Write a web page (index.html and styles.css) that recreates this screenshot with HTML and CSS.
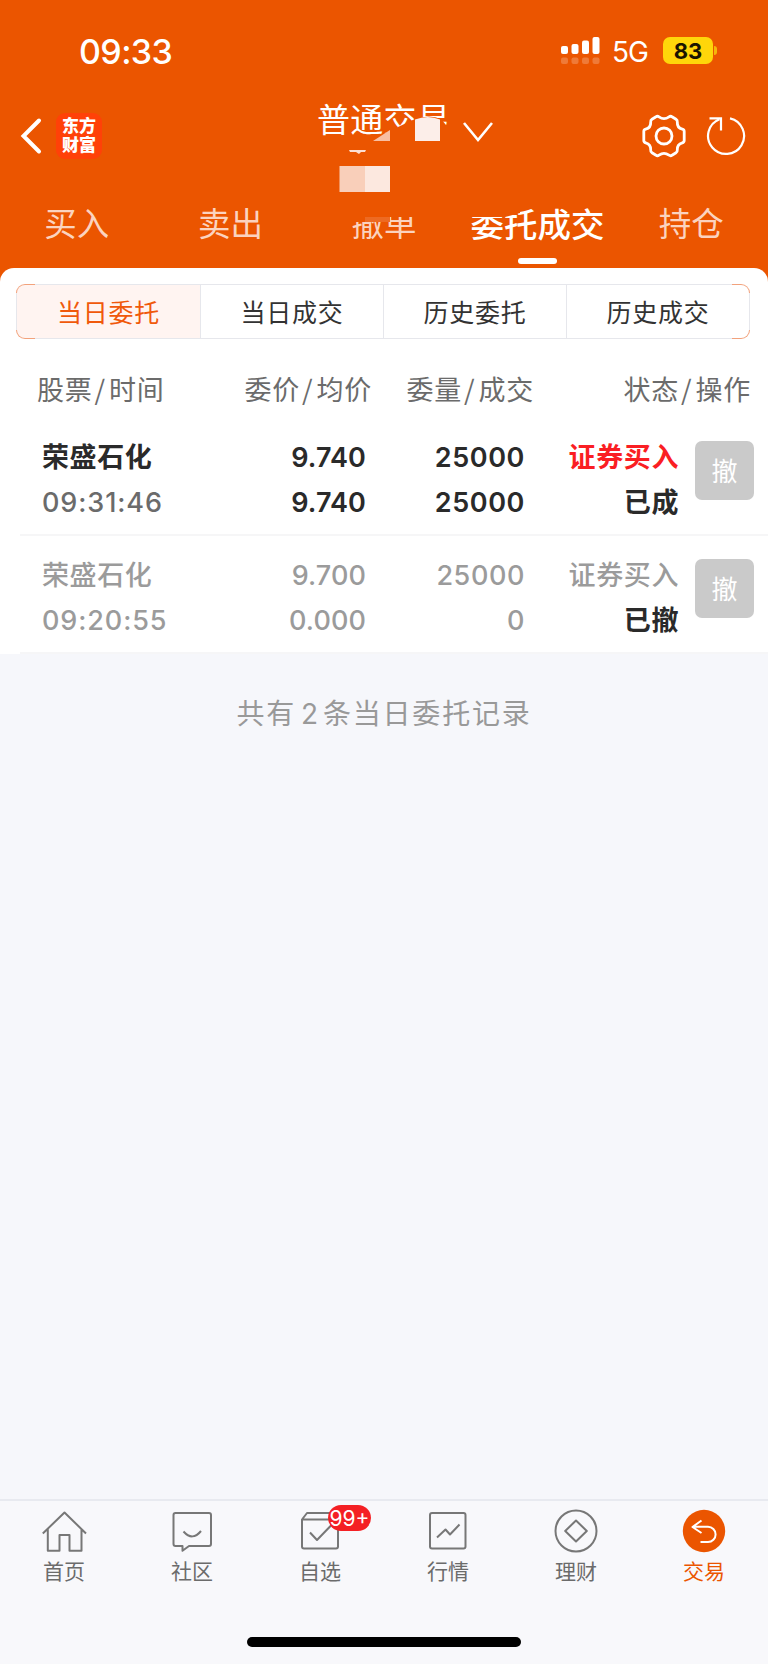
FILE: index.html
```html
<!DOCTYPE html>
<html lang="zh-CN">
<head>
    <meta charset="UTF-8">
    <meta name="viewport" content="width=device-width, initial-scale=1.0">
    <title>委托成交</title>
    <link rel="stylesheet" href="styles.css">
</head>
<body>

<header class="header">
    <div class="status-bar">
        <span class="clock">09:33</span>
        <svg class="signal" width="39" height="27" viewBox="0 0 39 27" fill="#fff">
            <rect x="0" y="9" width="7" height="8" rx="2"/>
            <rect x="10.5" y="7" width="7" height="10" rx="2"/>
            <rect x="21" y="3.5" width="7" height="13.5" rx="2"/>
            <rect x="31.5" y="0" width="7" height="17" rx="2"/>
            <g fill-opacity="0.22">
                <rect x="0" y="20.5" width="7" height="6.5" rx="2"/>
                <rect x="10.5" y="20.5" width="7" height="6.5" rx="2"/>
                <rect x="21" y="20.5" width="7" height="6.5" rx="2"/>
                <rect x="31.5" y="20.5" width="7" height="6.5" rx="2"/>
            </g>
        </svg>
        <span class="network">5G</span>
        <span class="battery">83</span>
        <span class="battery-tip"></span>
    </div>

    <div class="title-bar">
        <svg class="back" width="22" height="38" viewBox="0 0 22 38" fill="none" stroke="#fff" stroke-width="4">
            <path d="M19 3.5L3.5 19L19 34.5" stroke-linecap="round"/>
        </svg>
        <div class="logo"><span>东方</span><span>财富</span></div>
        <h1 class="title">普通交易</h1>
        <svg class="arrow" width="32" height="22" viewBox="0 0 32 22" fill="none" stroke="#fff" stroke-width="2.6">
            <path d="M2 2L16 19L30 2"/>
        </svg>
        <svg class="gear" width="46" height="46" viewBox="0 0 46 46" fill="none" stroke="#fff" stroke-width="2.8" stroke-linejoin="round">
            <path d="M15 3.8Q16.4 2.7 18 3.8Q23 7.4 28 3.8Q29.6 2.7 31 3.8L35 6.3Q36.5 7.2 36.3 9Q36 14.9 41.3 16.2Q43.2 16.7 43.2 18.5V27.5Q43.2 29.3 41.3 29.8Q36 31.1 36.3 37Q36.5 38.8 35 39.7L31 42.2Q29.6 43.3 28 42.2Q23 38.6 18 42.2Q16.4 43.3 15 42.2L11 39.7Q9.5 38.8 9.7 37Q10 31.1 4.7 29.8Q2.8 29.3 2.8 27.5V18.5Q2.8 16.7 4.7 16.2Q10 14.9 9.7 9Q9.5 7.2 11 6.3Z"/>
            <circle cx="23" cy="23" r="8"/>
        </svg>
        <svg class="refresh" width="40" height="40" viewBox="0 0 40 40" fill="none" stroke="#fff" stroke-width="2.2">
            <path d="M24 2.4A18 18 0 1 1 13.5 3.2"/>
            <path d="M3.5 2.3H15V14.5"/>
        </svg>
    </div>

    <nav class="tabs">
        <a class="tab">买入</a>
        <a class="tab">卖出</a>
        <a class="tab">撤单</a>
        <a class="tab active">委托成交</a>
        <a class="tab">持仓</a>
    </nav>

    <!-- masked account number -->
    <svg class="mask" width="200" height="130" viewBox="330 95 200 130">
        <path fill="#eb5500" d="M373 141L390 130L398 127L415 119Q430 114 441 119L446 125L452 121V145H520V213L505 217H415V217H390V222H340V141Z"/>
        <path fill="#f8bfa3" d="M373 141L390 130V141Z"/>
        <path fill="#fceee9" d="M415 119.5Q428 114.5 440 119.5V141H415Z"/>
        <path fill="#fcdfd2" d="M349 150H366L365 152H361L359 154L356 152H350Z"/>
        <rect x="339.5" y="166" width="25.5" height="26" fill="#f9cfba"/>
        <rect x="365" y="166" width="25" height="26" fill="#fce8df"/>
        <path fill="#ed6a22" d="M365 217H390V222H365Z"/>
    </svg>
</header>

<main class="panel">
    <div class="segment">
        <button class="segment-btn selected">当日委托</button>
        <button class="segment-btn">当日成交</button>
        <button class="segment-btn">历史委托</button>
        <button class="segment-btn">历史成交</button>
    </div>

    <div class="columns table-head">
        <span>股票<i>/</i>时间</span>
        <span>委价<i>/</i>均价</span>
        <span>委量<i>/</i>成交</span>
        <span>状态<i>/</i>操作</span>
    </div>

    <div class="columns order">
        <div class="cell"><b>荣盛石化</b><span class="time">09:31:46</span></div>
        <div class="cell price"><b>9.740</b><b>9.740</b></div>
        <div class="cell"><b>25000</b><b>25000</b></div>
        <div class="cell"><b class="buy">证券买入</b><b>已成</b></div>
        <button class="cancel-btn">撤</button>
    </div>

    <div class="columns order cancelled">
        <div class="cell"><b>荣盛石化</b><span class="time">09:20:55</span></div>
        <div class="cell price"><b>9.700</b><b>0.000</b></div>
        <div class="cell"><b>25000</b><b>0</b></div>
        <div class="cell"><b>证券买入</b><b class="state">已撤</b></div>
        <button class="cancel-btn">撤</button>
    </div>
</main>

<p class="summary">共有<span>2</span>条当日委托记录</p>

<footer class="bottom">
    <nav class="bottom-nav">
        <a class="nav-item">
            <svg width="46" height="46" viewBox="0 0 46 46">
                <path d="M1.8 24.5L23.5 3.5L45 24.5M6.8 20V41.8H18.5V26H28.5V41.8H40.5V20"/>
            </svg>
            首页
        </a>
        <a class="nav-item">
            <svg width="46" height="46" viewBox="0 0 46 46">
                <path d="M6.5 4H40Q42 4 42 6V35Q42 37 40 37H20L13.5 41.8V37H6.5Q4.5 37 4.5 35V6Q4.5 4 6.5 4Z"/>
                <path d="M14.5 22.5Q23.5 32.5 32 22"/>
            </svg>
            社区
        </a>
        <a class="nav-item">
            <svg width="46" height="46" viewBox="0 0 46 46">
                <path d="M5 10.5H41V37.5Q41 39.5 39 39.5H7Q5 39.5 5 37.5V10.5L10 4H36L41 10.5"/>
                <path d="M13 23.5L20 31L34 16.5"/>
            </svg>
            自选
            <span class="badge">99+</span>
        </a>
        <a class="nav-item">
            <svg width="46" height="46" viewBox="0 0 46 46">
                <rect x="5" y="4" width="35.5" height="35.5" rx="2"/>
                <path d="M12 28.5L20.5 20.5L25 25.5L34.5 15.5"/>
            </svg>
            行情
        </a>
        <a class="nav-item">
            <svg width="46" height="46" viewBox="0 0 46 46">
                <circle cx="23" cy="22" r="20.5"/>
                <path d="M23 11.5L33.8 22L23 32.5L12.2 22Z"/>
            </svg>
            理财
        </a>
        <a class="nav-item current">
            <svg width="46" height="46" viewBox="0 0 46 46">
                <circle cx="23" cy="22" r="21.2" fill="#eb5500" stroke="none"/>
                <path stroke="#fff" d="M20.5 11.5L11.5 18L20.5 24M12 17.8H27A7.6 7.6 0 0 1 27 33H19.5"/>
            </svg>
            交易
        </a>
    </nav>
    <div class="home-bar"></div>
</footer>

</body>
</html>
```

FILE: styles.css
```css
* {
    box-sizing: border-box;
}

body {
    margin: 0;
    width: 768px;
    height: 1664px;
    display: flex;
    flex-direction: column;
    background-color: #f6f7fb;
    font-family: Inter, 'Noto Sans CJK SC', sans-serif;
    color: #2a2a2a;
    overflow: hidden;
}

button {
    font-family: inherit;
    padding: 0;
    border: none;
}

/* Header */
.header {
    position: relative;
    height: 285px;
    flex-shrink: 0;
    background-color: #eb5500;
    color: #fff;
}

.status-bar {
    display: flex;
    align-items: center;
    height: 101px;
    padding-left: 79px;
}

.clock {
    width: 482px;
    padding-top: 1px;
    font-size: 34px;
    font-weight: 500;
    letter-spacing: -0.6px;
}

.network {
    width: 49px;
    padding: 3px 0 0 12px;
    font-size: 28px;
    letter-spacing: -1px;
}

.battery {
    width: 50px;
    height: 27px;
    margin-left: 14px;
    border-radius: 7px;
    background-color: #ffd60a;
    color: #1a1400;
    font-size: 22px;
    font-weight: 700;
    line-height: 28px;
    text-align: center;
}

.battery-tip {
    width: 3px;
    height: 9px;
    margin-left: 1px;
    border-radius: 0 4px 4px 0;
    background-color: #f5b70a;
}

.title-bar {
    display: flex;
    align-items: center;
    height: 70px;
    padding-left: 20px;
}

.logo {
    display: flex;
    flex-direction: column;
    width: 46px;
    height: 46px;
    margin-left: 14px;
    padding-top: 4px;
    border-radius: 9px;
    background-color: #ff4108;
    font-size: 17px;
    font-weight: 900;
    line-height: 19px;
    text-align: center;
}

.title {
    width: 134px;
    height: 66px;
    margin: 0 0 0 215px;
    font-size: 33px;
    font-weight: 400;
    line-height: 34px;
    letter-spacing: 0.3px;
    white-space: nowrap;
}

.arrow {
    margin: 0 0 9px 11px;
}

.gear {
    margin-left: 147px;
}

.refresh {
    margin-left: 19px;
}

.tabs {
    display: grid;
    grid-template-columns: repeat(5, 1fr);
    height: 96px;
}

.tab {
    display: flex;
    flex-direction: column;
    align-items: center;
    padding-top: 30px;
    font-size: 32.5px;
    line-height: 48px;
    color: #fbd3bf;
}

.tab.active {
    color: #fff;
    font-weight: 500;
    font-size: 33.5px;
}

.tab.active::after {
    content: '';
    width: 39px;
    height: 6px;
    margin-top: 9px;
    border-radius: 3px;
    background-color: #fff;
}

.mask {
    position: absolute;
    left: 330px;
    top: 95px;
}

/* Orders */
.panel {
    position: relative;
    margin-top: -17px;
    height: 386px;
    flex-shrink: 0;
    border-radius: 14px 14px 0 0;
    background-color: #fff;
    padding-top: 16px;
}

/* grey edges, orange only on the rounded corners */
.segment {
    display: grid;
    grid-template-columns: repeat(4, 1fr);
    height: 55px;
    margin: 0 18px 0 16px;
    border: 1.5px solid transparent;
    border-radius: 9px;
    background:
        linear-gradient(#e6e7ec, #e6e7ec) center / 100% 37px no-repeat border-box,
        linear-gradient(#e6e7ec, #e6e7ec) center / 697px 100% no-repeat border-box,
        linear-gradient(#f2a27c, #f2a27c) border-box;
    overflow: hidden;
}

.segment-btn {
    padding-bottom: 2px;
    background-color: #fff;
    border-left: 1.5px solid #e6e7ec;
    color: #333;
    font-size: 25px;
    letter-spacing: 0.7px;
}

.segment-btn.selected {
    background-color: #fff4f1;
    border-left: none;
    color: #f0590b;
}

.columns {
    display: grid;
    text-align: right;
}

.columns > :first-child {
    text-align: left;
}

.table-head {
    grid-template-columns: 220px 115px 162px 217px;
    height: 79px;
    padding-left: 37px;
    font-size: 27px;
    line-height: 100px;
    letter-spacing: 0.8px;
    color: #6b6b6b;
    font-family: 'Noto Sans CJK SC', sans-serif;
    white-space: nowrap;
}

.table-head span {
    display: flex;
    justify-content: flex-end;
}

.table-head span:first-child {
    justify-content: flex-start;
}

.table-head i {
    margin: 0 3px 0 2px;
    font-style: normal;
}

.order {
    grid-template-columns: 210px 114px 159px 154px 76px;
    height: 118px;
    margin-left: 20px;
    padding: 17px 0 0 22px;
    border-bottom: 2px solid #f6f6f7;
}

.cell {
    display: flex;
    flex-direction: column;
    font-size: 27px;
    line-height: 45px;
    letter-spacing: 0.6px;
    white-space: nowrap;
}

.cell b {
    font-weight: 600;
}

.cell.price {
    letter-spacing: 0.1px;
}

.cell .time {
    font-weight: 500;
    letter-spacing: 0.9px;
    color: #6b6b6b;
}

.buy {
    color: #fa1e23;
}

.cancelled .cell,
.cancelled .cell .time {
    color: #9b9b9b;
}

.cancelled .cell b {
    font-weight: 500;
}

.cancelled .cell .state {
    color: #2a2a2a;
    font-weight: 600;
}

.cancel-btn {
    width: 59px;
    height: 59px;
    margin: 6px 0 0 16px;
    padding-bottom: 2px;
    border-radius: 7px;
    background-color: #cacaca;
    color: #fff;
    font-size: 26px;
}

.summary {
    margin: 38px 0 0;
    font-size: 28px;
    line-height: 45px;
    letter-spacing: 1.8px;
    text-align: center;
    color: #999;
}

.summary span {
    margin: 0 3px 0 5px;
}

/* Bottom navigation */
.bottom {
    height: 165px;
    margin-top: auto;
    border-top: 2px solid #e8eaf0;
    background-color: #f8f8fb;
}

.bottom-nav {
    display: grid;
    grid-template-columns: repeat(6, 1fr);
    height: 136px;
}

.nav-item {
    position: relative;
    display: flex;
    flex-direction: column;
    align-items: center;
    gap: 1px;
    padding-top: 8px;
    font-size: 21px;
    line-height: 32px;
    color: #6b6b6b;
}

.nav-item svg {
    fill: none;
    stroke: #777;
    stroke-width: 2;
    stroke-linejoin: round;
}

.nav-item.current {
    color: #eb5500;
}

.badge {
    position: absolute;
    left: 72px;
    top: 4px;
    width: 43px;
    height: 26px;
    border-radius: 13px;
    background-color: #f42024;
    color: #fff;
    font-size: 21px;
    line-height: 27px;
    text-align: center;
}

.home-bar {
    width: 274px;
    height: 10px;
    margin: 0 auto;
    border-radius: 5px;
    background-color: #000;
}
```
